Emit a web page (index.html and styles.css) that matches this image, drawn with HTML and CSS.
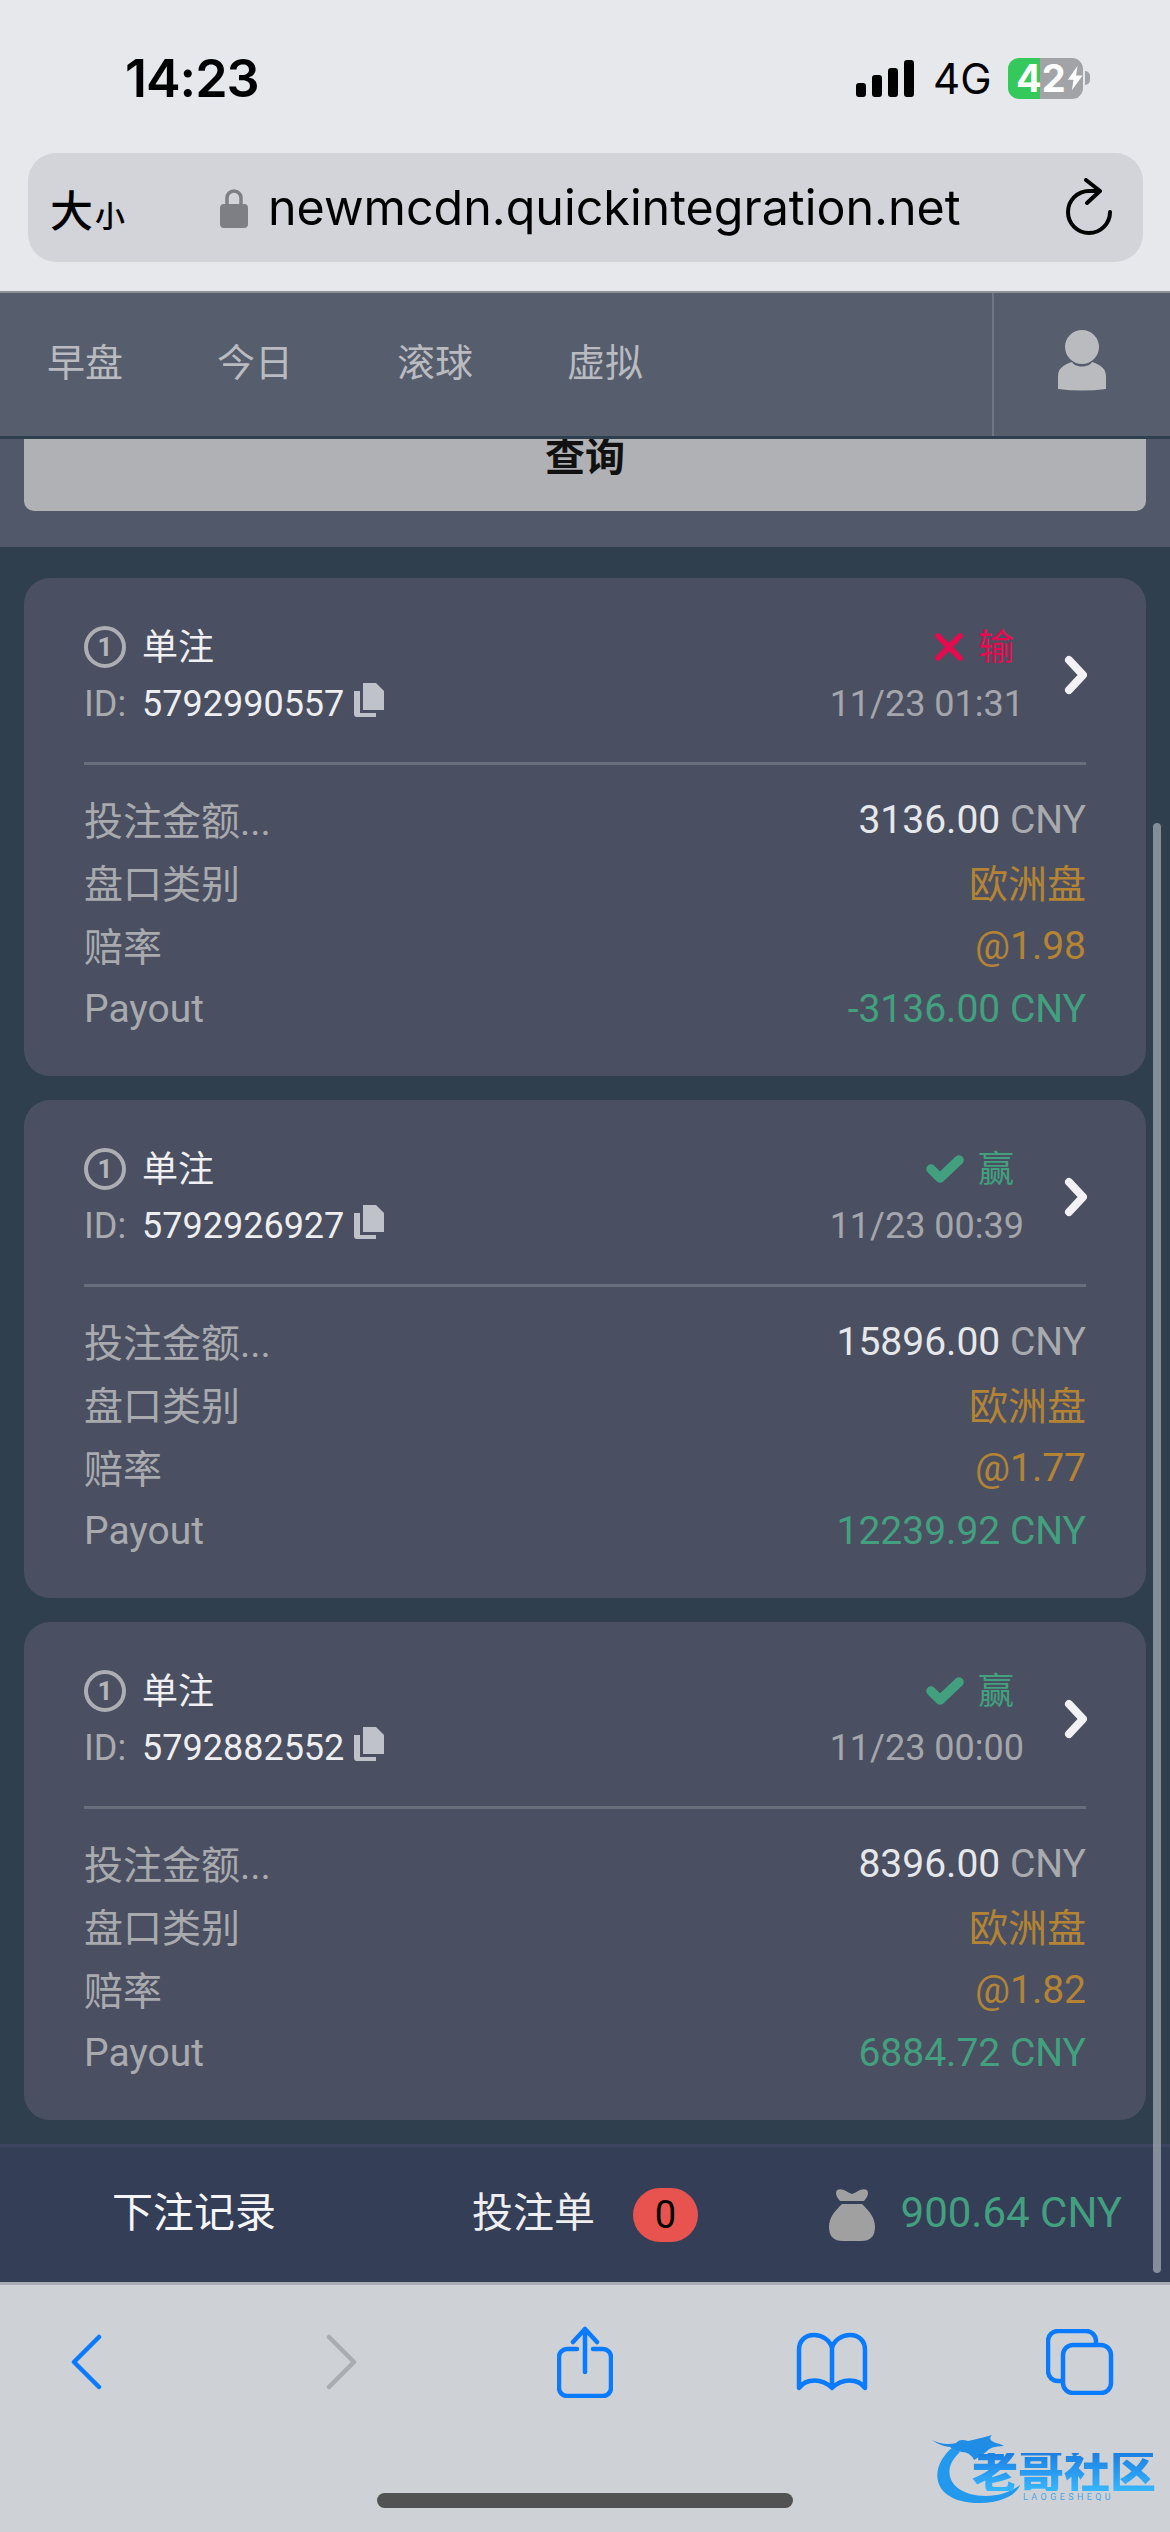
FILE: index.html
```html
<!DOCTYPE html>
<html lang="zh">
<head>
	<meta charset="UTF-8">
	<title>newmcdn.quickintegration.net</title>
	<link rel="stylesheet" href="styles.css">
</head>
<body>

<div class="screen">

	<header class="browser-top">
		<div class="status-bar">
			<span class="clock">14:23</span>
			<svg class="signal" width="58" height="37" viewBox="0 0 58 37"><rect x="0" y="23" width="10" height="14" rx="3"/><rect x="16" y="15" width="10" height="22" rx="3"/><rect x="32" y="8" width="10" height="29" rx="3"/><rect x="48" y="0" width="10" height="37" rx="3"/></svg>
			<span class="network">4G</span>
			<div class="battery">
				<span class="battery-level">42</span>
				<svg class="battery-bolt" width="20" height="30" viewBox="0 0 20 30"><path d="M13 0 L1 17 H8 L6 30 L19 12 H11 Z"/></svg>
			</div>
			<span class="battery-tip"></span>
		</div>
		<div class="url-bar">
			<span class="text-size">大<small>小</small></span>
			<svg class="lock" width="28" height="40" viewBox="0 0 28 40"><path d="M7 17 V10 a7 7 0 0 1 14 0 V17" fill="none" stroke="#7e7f84" stroke-width="3.5"/><rect x="0" y="16" width="28" height="24" rx="4" fill="#7e7f84"/></svg>
			<span class="url-text">newmcdn.quickintegration.net</span>
			<svg class="reload" width="50" height="60" viewBox="0 0 50 60"><path d="M45 34 A21 21 0 1 1 24 13 H30 M21 2 L35 13 L22 25" fill="none" stroke="#000" stroke-width="4" stroke-linecap="round" stroke-linejoin="round"/></svg>
		</div>
	</header>

	<nav class="site-nav">
		<div class="nav-links">
			<a class="nav-link">早盘</a>
			<a class="nav-link">今日</a>
			<a class="nav-link nav-live">滚球</a>
			<a class="nav-link">虚拟</a>
		</div>
		<div class="nav-account">
			<svg width="48" height="62" viewBox="0 0 48 62"><ellipse cx="24" cy="17" rx="17" ry="17" fill="#b9bbbf"/><path d="M0 59 V46 C0 37 8 34 14 32 C17 38 31 38 34 32 C40 34 48 37 48 46 V59 Q24 62 0 59 Z" fill="#b9bbbf"/></svg>
		</div>
	</nav>

	<main class="content">
		<div class="query-panel">
			<div class="query-btn">查询</div>
		</div>

		<div class="bet-list">

			<section class="bet-card">
				<div class="bet-head">
					<div class="bet-info">
						<div class="bet-line"><span class="bet-num">1</span><span class="bet-type">单注</span></div>
						<div class="bet-line"><span class="id-label">ID:</span><span class="id-value">5792990557</span>
							<svg class="copy-icon" width="30" height="34" viewBox="0 0 30 34"><path d="M9 0 H22 L30 8 V27 H9 Z" fill="#c0c2ca"/><path d="M6 8 V30 H22 V34 H3 Q0 34 0 31 V8 Z" fill="#c0c2ca"/></svg>
						</div>
					</div>
					<div class="bet-result">
						<div class="bet-line">
							<svg width="30" height="30" viewBox="0 0 30 30"><path d="M4 4 L26 26 M26 4 L4 26" fill="none" stroke="#e60a4e" stroke-width="5.5" stroke-linecap="round"/></svg>
							<span class="result-text result-lose">输</span>
						</div>
						<div class="bet-line bet-time">11/23 01:31</div>
					</div>
					<svg class="chevron" width="24" height="40" viewBox="0 0 24 40"><path d="M6 5 L20 20 L6 35" fill="none" stroke="#f2f2f4" stroke-width="8" stroke-linecap="round" stroke-linejoin="round"/></svg>
				</div>
				<dl class="bet-rows">
					<div class="bet-row"><dt class="cn">投注金额...</dt><dd><span class="amount">3136.00</span> CNY</dd></div>
					<div class="bet-row"><dt class="cn">盘口类别</dt><dd class="orange cn">欧洲盘</dd></div>
					<div class="bet-row"><dt class="cn">赔率</dt><dd class="orange">@1.98</dd></div>
					<div class="bet-row"><dt>Payout</dt><dd class="green">-3136.00 CNY</dd></div>
				</dl>
			</section>

			<section class="bet-card">
				<div class="bet-head">
					<div class="bet-info">
						<div class="bet-line"><span class="bet-num">1</span><span class="bet-type">单注</span></div>
						<div class="bet-line"><span class="id-label">ID:</span><span class="id-value">5792926927</span>
							<svg class="copy-icon" width="30" height="34" viewBox="0 0 30 34"><path d="M9 0 H22 L30 8 V27 H9 Z" fill="#c0c2ca"/><path d="M6 8 V30 H22 V34 H3 Q0 34 0 31 V8 Z" fill="#c0c2ca"/></svg>
						</div>
					</div>
					<div class="bet-result">
						<div class="bet-line">
							<svg width="38" height="30" viewBox="0 0 38 30"><path d="M5 15 L14 24 L33 6" fill="none" stroke="#43a07f" stroke-width="9.5" stroke-linecap="round" stroke-linejoin="round"/></svg>
							<span class="result-text result-win">赢</span>
						</div>
						<div class="bet-line bet-time">11/23 00:39</div>
					</div>
					<svg class="chevron" width="24" height="40" viewBox="0 0 24 40"><path d="M6 5 L20 20 L6 35" fill="none" stroke="#f2f2f4" stroke-width="8" stroke-linecap="round" stroke-linejoin="round"/></svg>
				</div>
				<dl class="bet-rows">
					<div class="bet-row"><dt class="cn">投注金额...</dt><dd><span class="amount">15896.00</span> CNY</dd></div>
					<div class="bet-row"><dt class="cn">盘口类别</dt><dd class="orange cn">欧洲盘</dd></div>
					<div class="bet-row"><dt class="cn">赔率</dt><dd class="orange">@1.77</dd></div>
					<div class="bet-row"><dt>Payout</dt><dd class="green">12239.92 CNY</dd></div>
				</dl>
			</section>

			<section class="bet-card">
				<div class="bet-head">
					<div class="bet-info">
						<div class="bet-line"><span class="bet-num">1</span><span class="bet-type">单注</span></div>
						<div class="bet-line"><span class="id-label">ID:</span><span class="id-value">5792882552</span>
							<svg class="copy-icon" width="30" height="34" viewBox="0 0 30 34"><path d="M9 0 H22 L30 8 V27 H9 Z" fill="#c0c2ca"/><path d="M6 8 V30 H22 V34 H3 Q0 34 0 31 V8 Z" fill="#c0c2ca"/></svg>
						</div>
					</div>
					<div class="bet-result">
						<div class="bet-line">
							<svg width="38" height="30" viewBox="0 0 38 30"><path d="M5 15 L14 24 L33 6" fill="none" stroke="#43a07f" stroke-width="9.5" stroke-linecap="round" stroke-linejoin="round"/></svg>
							<span class="result-text result-win">赢</span>
						</div>
						<div class="bet-line bet-time">11/23 00:00</div>
					</div>
					<svg class="chevron" width="24" height="40" viewBox="0 0 24 40"><path d="M6 5 L20 20 L6 35" fill="none" stroke="#f2f2f4" stroke-width="8" stroke-linecap="round" stroke-linejoin="round"/></svg>
				</div>
				<dl class="bet-rows">
					<div class="bet-row"><dt class="cn">投注金额...</dt><dd><span class="amount">8396.00</span> CNY</dd></div>
					<div class="bet-row"><dt class="cn">盘口类别</dt><dd class="orange cn">欧洲盘</dd></div>
					<div class="bet-row"><dt class="cn">赔率</dt><dd class="orange">@1.82</dd></div>
					<div class="bet-row"><dt>Payout</dt><dd class="green">6884.72 CNY</dd></div>
				</dl>
			</section>

		</div>
	</main>

	<footer class="bet-bar">
		<span class="bar-history">下注记录</span>
		<div class="bar-slip">
			<span class="slip-label">投注单</span>
			<span class="slip-count">0</span>
		</div>
		<div class="bar-balance">
			<svg width="46" height="52" viewBox="0 0 46 52"><path d="M8 1 Q12 -1 17 2 Q20 4 23 5 Q26 4 29 2 Q34 -1 38 1 Q41 5 35 12 H11 Q5 5 8 1 Z M13 15 H33 C40 22 46 28 46 38 Q46 52 32 52 H14 Q0 52 0 38 C0 28 6 22 13 15 Z" fill="#a0a0a0"/></svg>
			<span class="balance-text">900.64 CNY</span>
		</div>
	</footer>

	<div class="toolbar">
		<div class="toolbar-icons">
			<svg width="31" height="56" viewBox="0 0 31 56"><path d="M28 3 L3 28 L28 53" fill="none" stroke="#0a7aff" stroke-width="4.5" stroke-linecap="round" stroke-linejoin="round"/></svg>
			<svg width="31" height="56" viewBox="0 0 31 56"><path d="M3 3 L28 28 L3 53" fill="none" stroke="#a9acb0" stroke-width="4.5" stroke-linecap="round" stroke-linejoin="round"/></svg>
			<svg width="56" height="72" viewBox="0 0 56 72"><path d="M20 23 H10 a8 8 0 0 0 -8 8 V62 a8 8 0 0 0 8 8 H46 a8 8 0 0 0 8 -8 V31 a8 8 0 0 0 -8 -8 H36 M28 3 V46 M16 16 L28 3 L40 16" fill="none" stroke="#0a7aff" stroke-width="4.5" stroke-linecap="round" stroke-linejoin="round"/></svg>
			<svg width="72" height="60" viewBox="0 0 72 60"><path d="M3 56 V18 C3 8 10 3 18 3 C26 3 34 8 36 16 C38 8 46 3 54 3 C62 3 69 8 69 18 V56 C62 46 46 46 36 56 C26 46 10 46 3 56 Z M36 16 V55" fill="none" stroke="#0a7aff" stroke-width="4.5" stroke-linejoin="round"/></svg>
			<svg width="68" height="66" viewBox="0 0 68 66"><path d="M15 52 H12 a10 10 0 0 1 -10 -10 V12 a10 10 0 0 1 10 -10 H40 a10 10 0 0 1 10 10 V16" fill="none" stroke="#0a7aff" stroke-width="4.5"/><rect x="17" y="16" width="48" height="48" rx="10" fill="none" stroke="#0a7aff" stroke-width="4.5"/></svg>
		</div>
		<div class="home-indicator"></div>
	</div>

	<div class="scroll-thumb"></div>

	<div class="watermark">
		<svg class="watermark-dragon" width="100" height="76" viewBox="0 0 100 76"><path d="M21 15 C-4 35 -2 71 48 71 C68 71 84 64 88 53 C74 64 54 66 38 62 C16 56 10 36 28 20 Z" fill="#2399ee"/><path d="M0 8 Q12 14 24 11 Q28 6 36 9 Q50 6 60 3 Q54 9 68 12 L72 14 Q58 14 54 20 Q46 26 42 28 Q38 20 30 20 Q22 18 18 15 Q8 14 0 8 Z" fill="#1f8ce6"/></svg>
		<span class="watermark-title">老哥社区</span>
		<span class="watermark-sub">LAOGESHEQU</span>
	</div>

</div>

</body>
</html>
```

FILE: styles.css
```css
* {
	margin: 0;
	padding: 0;
	box-sizing: border-box;
	font-family: "Roboto", "Noto Sans CJK SC", sans-serif;
}
html, body {
	width: 1170px;
	height: 2532px;
	overflow: hidden;
}
.screen {
	position: relative;
	width: 1170px;
	height: 2532px;
	display: flex;
	flex-direction: column;
	background: #2f3f4e;
}

/* safari top */
.browser-top {
	height: 291px;
	flex: none;
	background: #e7e8ec;
	padding: 0 27px 0 28px;
}
.status-bar {
	height: 153px;
	display: flex;
	align-items: center;
	padding: 3px 0 0 97px;
}
.clock {
	font-size: 52px;
	color: #000;
	width: 731px;
	font-family: "Inter", sans-serif;
	font-weight: 600;
	letter-spacing: -1px;
}
.network {
	font-size: 42px;
	margin-left: 19px;
	color: #000;
	font-family: "Inter", sans-serif;
	width: 75px;
}
.battery {
	width: 75px;
	height: 41px;
	border-radius: 11px;
	background: linear-gradient(to right, #35c95c 0, #35c95c 32px, #a2a3a7 32px);
	display: flex;
	align-items: center;
	padding-left: 8px;
}
.battery-level {
	font-size: 38px;
	font-weight: 700;
	color: #fff;
	line-height: 41px;
	font-family: "Inter", sans-serif;
}
.battery-bolt {
	fill: #fff;
	margin-left: 1px;
}
.battery-tip {
	width: 5px;
	height: 14px;
	margin-left: 2px;
	border-radius: 0 7px 7px 0;
	background: #a2a3a7;
}
.url-bar {
	height: 109px;
	display: flex;
	align-items: center;
	background: #d2d4d9;
	border-radius: 28px;
	padding-left: 22px;
}
.text-size {
	font-size: 43px;
	color: #000;
	width: 170px;
	font-weight: 500;
}
.text-size small {
	font-size: 30px;
	margin-left: 2px;
}
.lock {
	margin-right: 20px;
}
.url-text {
	font-family: "Inter", sans-serif;
	font-size: 48.4px;
	color: #000;
	width: 797px;
	white-space: nowrap;
}

/* site nav */
.site-nav {
	height: 148px;
	flex: none;
	display: flex;
	background: #565d6c;
	border-top: 2px solid #8d9097;
	border-bottom: 3px solid #2f3f4e;
}
.nav-links {
	width: 994px;
	display: flex;
	align-items: center;
	gap: 94px;
	padding-left: 47px;
	padding-bottom: 10px;
	border-right: 2px solid #6f7582;
}
.nav-link {
	font-size: 38px;
	color: #b9bbc0;
}
.nav-live {
	margin-left: 10px;
}
.nav-account {
	flex: 1;
	display: flex;
	align-items: center;
	justify-content: center;
	padding-bottom: 7px;
}

/* page */
.content {
	flex: 1;
	overflow: hidden;
}
.query-panel {
	height: 108px;
	padding: 0 24px;
	background: #50586a;
}
.query-btn {
	height: 72px;
	line-height: 38px;
	background: #b0b1b5;
	border-radius: 0 0 10px 10px;
	text-align: center;
	font-size: 40px;
	font-weight: 700;
	color: #111;
}
.bet-list {
	display: flex;
	flex-direction: column;
	gap: 24px;
	padding: 31px 24px 0;
}
.bet-card {
	height: 498px;
	padding: 40px 60px 0;
	border-radius: 26px;
	background: #4a5061;
}
.bet-head {
	display: flex;
	align-items: center;
	padding-bottom: 30px;
	border-bottom: 3px solid #686e7b;
}
.bet-info {
	flex: 1;
}
.bet-line {
	height: 57px;
	display: flex;
	align-items: center;
}
.bet-num {
	width: 42px;
	height: 42px;
	border: 4px solid #adaeb3;
	border-radius: 50%;
	display: flex;
	align-items: center;
	justify-content: center;
	font-size: 26px;
	font-weight: 700;
	color: #b4b5ba;
}
.bet-type {
	margin-left: 16px;
	padding-bottom: 5px;
	font-size: 36px;
	color: #f0f0f2;
}
.id-label {
	width: 58px;
	font-size: 36px;
	color: #a9aaae;
}
.id-value {
	font-size: 36px;
	color: #eeeef0;
}
.copy-icon {
	margin: -8px 0 0 10px;
}
.bet-result .bet-line {
	justify-content: flex-end;
}
.result-text {
	margin: 0 10px 0 14px;
	padding-bottom: 5px;
	font-size: 36px;
}
.result-lose {
	color: #e60a4e;
}
.result-win {
	color: #43a07f;
}
.bet-time {
	font-size: 36px;
	color: #a5a6ab;
}
.chevron {
	margin-left: 39px;
	margin-right: -1px;
}
.bet-rows {
	padding-top: 23px;
}
.bet-row {
	height: 63px;
	display: flex;
	align-items: center;
	justify-content: space-between;
	font-size: 39px;
}
.bet-row dt,
.bet-row dd {
	color: #a9aaae;
}
.bet-row .cn {
	padding-bottom: 4px;
}
.amount {
	color: #e6e7ea;
}
.bet-row .orange {
	color: #b48434;
}
.bet-row .green {
	color: #43a07f;
}

/* bottom bar */
.bet-bar {
	height: 138px;
	flex: none;
	display: flex;
	align-items: center;
	padding: 0 48px 0 112px;
	background: #343e57;
	border-top: 3px solid #3c4460;
}
.bar-history {
	font-size: 41px;
	padding-bottom: 12px;
	color: #f6f6f8;
}
.bar-slip {
	display: flex;
	align-items: center;
	margin-left: 196px;
	font-size: 41px;
	color: #eeeef0;
}
.slip-label {
	padding-bottom: 12px;
}
.slip-count {
	width: 65px;
	height: 54px;
	margin-left: 38px;
	border-radius: 27px;
	background: #e8534f;
	color: #000;
	font-size: 38px;
	line-height: 54px;
	text-align: center;
}
.bar-balance {
	margin-left: auto;
	display: flex;
	align-items: center;
	gap: 26px;
}
.balance-text {
	font-size: 42px;
	padding-bottom: 5px;
	color: #43a07f;
}

/* safari bottom */
.toolbar {
	height: 250px;
	flex: none;
	padding-top: 41px;
	background: #ced2d6;
	border-top: 3px solid #a9acb3;
}
.toolbar-icons {
	height: 72px;
	display: grid;
	grid-template-columns: 172px 338px 150px 344px 152px;
	align-items: center;
	justify-items: center;
}
.home-indicator {
	width: 416px;
	height: 15px;
	margin: 95px auto 0;
	border-radius: 8px;
	background: #525252;
}

/* overlays */
.scroll-thumb {
	position: absolute;
	left: 1153px;
	top: 823px;
	width: 8px;
	height: 1450px;
	border-radius: 4px;
	background: rgba(200, 205, 212, 0.55);
}
.watermark {
	position: absolute;
	left: 932px;
	top: 2432px;
	width: 225px;
	height: 76px;
}
.watermark-dragon {
	position: absolute;
	left: 0;
	top: 0;
}
.watermark-title {
	position: absolute;
	left: 40px;
	top: 21px;
	font-size: 46px;
	line-height: 38px;
	font-weight: 900;
	white-space: nowrap;
	color: transparent;
	background: linear-gradient(to bottom, #1b7fe2, #37b6ff);
	-webkit-background-clip: text;
	background-clip: text;
}
.watermark-sub {
	position: absolute;
	left: 91px;
	top: 60px;
	font-size: 9px;
	line-height: 10px;
	letter-spacing: 3.4px;
	color: #4aa3e8;
}
```
